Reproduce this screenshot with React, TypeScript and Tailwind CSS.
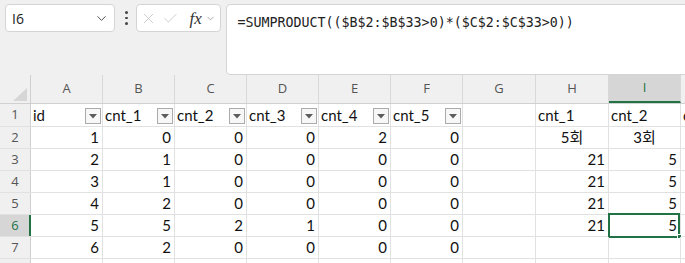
import { X, Check, ChevronDown } from 'lucide-react'

type Col = { key: string; w: string }

const cols: Col[] = [
  { key: 'A', w: 'w-[72px]' },
  { key: 'B', w: 'w-[72px]' },
  { key: 'C', w: 'w-[72px]' },
  { key: 'D', w: 'w-[72px]' },
  { key: 'E', w: 'w-[72px]' },
  { key: 'F', w: 'w-[72px]' },
  { key: 'G', w: 'w-[73px]' },
  { key: 'H', w: 'w-[73px]' },
  { key: 'I', w: 'w-[72px]' },
  { key: '', w: 'w-[72px]' },
]

const header = ['id', 'cnt_1', 'cnt_2', 'cnt_3', 'cnt_4', 'cnt_5', '', 'cnt_1', 'cnt_2', 'c']

const rows: (string | number)[][] = [
  [1, 0, 0, 0, 2, 0, '', '5회', '3회', ''],
  [2, 1, 0, 0, 0, 0, '', 21, 5, ''],
  [3, 1, 0, 0, 0, 0, '', 21, 5, ''],
  [4, 2, 0, 0, 0, 0, '', 21, 5, ''],
  [5, 5, 2, 1, 0, 0, '', 21, 5, ''],
  [6, 2, 0, 0, 0, 0, '', '', '', ''],
]

const cellFont = "font-['Lato','Noto_Sans_CJK_KR',sans-serif] text-[15px] text-[#111]"

function FilterButton() {
  return (
    <span className="ml-auto mr-[1px] mb-[1px] flex h-[16px] w-[16px] shrink-0 items-center justify-center border border-[#ababab] bg-[#f7f7f7]">
      <svg width="8" height="5" viewBox="0 0 8 5">
        <path d="M0 0h8L4 4.5z" fill="#5c5c5c" />
      </svg>
    </span>
  )
}

function FormulaBar() {
  return (
    <div className="flex h-[75px] items-start bg-[#f0f0f0] pt-[4px]">
      <div className="ml-[5px] flex h-[28px] w-[110px] shrink-0 items-center rounded-[4px] border border-[#d4d4d4] bg-white pl-[6px] pr-[5px]">
        <span className="font-['Open_Sans',sans-serif] text-[14px] text-[#222]">I6</span>
        <ChevronDown className="ml-auto text-[#444]" size={15} strokeWidth={1.5} />
      </div>
      <div className="ml-[10px] flex h-[28px] w-[3px] flex-col items-center justify-center gap-[3px]">
        <span className="h-[2.5px] w-[2.5px] rounded-full bg-[#444]" />
        <span className="h-[2.5px] w-[2.5px] rounded-full bg-[#444]" />
        <span className="h-[2.5px] w-[2.5px] rounded-full bg-[#444]" />
      </div>
      <div className="ml-[8px] flex h-[28px] w-[85px] shrink-0 items-center rounded-[4px] border border-[#d4d4d4] bg-white pl-[3px]">
        <X className="text-[#c4c4c4]" size={17} strokeWidth={1.2} />
        <Check className="ml-[5px] text-[#c4c4c4]" size={17} strokeWidth={1.2} />
        <span className="ml-[11px] font-['Liberation_Serif',serif] text-[17px] italic leading-none text-[#333]">fx</span>
        <ChevronDown className="ml-[3px] text-[#888]" size={11} strokeWidth={1.5} />
      </div>
      <div className="ml-[5px] h-[71px] w-[480px] shrink-0 rounded-[4px] border border-[#d4d4d4] bg-white pl-[11px] pt-[4px]">
        <span className="font-['DejaVu_Sans_Mono',monospace] text-[13.3px] text-[#222]">
          =SUMPRODUCT(($B$2:$B$33&gt;0)*($C$2:$C$33&gt;0))
        </span>
      </div>
    </div>
  )
}

function ColumnHeader() {
  return (
    <div className="flex h-[29px] border-b border-[#d0d0d0] bg-[#f0f0f0]">
      <div className="relative w-[31px] shrink-0 border-r border-[#d0d0d0]">
        <svg className="absolute left-[13px] top-[13px]" width="14" height="13" viewBox="0 0 14 13">
          <path d="M14 0v13H0z" fill="#d6d6d6" />
        </svg>
      </div>
      {cols.map((c, i) => (
        <div
          key={i}
          className={`${c.w} shrink-0 flex items-center justify-center border-r border-[#d8d8d8] font-['Open_Sans',sans-serif] text-[13px] ${
            c.key === 'I' ? 'bg-[#d6d6d6] border-b-2 border-b-[#217346] text-[#217346]' : 'text-[#555]'
          }`}
        >
          {c.key}
        </div>
      ))}
    </div>
  )
}

function RowHeader({ n, active }: { n: number; active?: boolean }) {
  return (
    <div
      className={`flex w-[31px] shrink-0 items-center justify-center font-['Open_Sans',sans-serif] text-[13px] ${
        active
          ? 'border-r-2 border-r-[#217346] bg-[#d6d6d6] pl-[1px] text-[#217346]'
          : 'border-r border-[#d0d0d0] bg-[#f0f0f0] text-[#555]'
      }`}
    >
      {n}
    </div>
  )
}

export default function App() {
  return (
    <div className="h-[263px] w-[685px] overflow-hidden bg-white">
      <FormulaBar />
      <ColumnHeader />

      <div className="flex h-[23px] border-b border-[#e1e1e1]">
        <RowHeader n={1} />
        {cols.map((c, i) => (
          <div key={i} className={`${c.w} shrink-0 flex items-end border-r border-[#e1e1e1] pl-[2px] pb-[1px] ${cellFont}`}>
            <span className="leading-[19px] whitespace-nowrap">{header[i]}</span>
            {i < 6 && <FilterButton />}
          </div>
        ))}
      </div>

      {rows.map((r, ri) => (
        <div key={ri} className="flex h-[22px] border-b border-[#e1e1e1]">
          <RowHeader n={ri + 2} active={ri === 4} />
          {cols.map((c, i) => {
            const v = r[i]
            const centered = typeof v === 'string' && v.endsWith('회')
            const selected = ri === 4 && c.key === 'I'
            return (
              <div
                key={i}
                className={`${c.w} relative shrink-0 flex items-end border-r border-[#e1e1e1] pb-[1px] ${
                  centered ? 'justify-center' : 'justify-end pr-[3px]'
                } ${cellFont}`}
              >
                <span className="leading-[19px]">{v}</span>
                {selected && (
                  <>
                    <span className="absolute -left-[1px] -top-[2px] bottom-[-2px] right-[0px] border-2 border-[#217346]" />
                    <span className="absolute -bottom-[3px] -right-[2px] h-[5px] w-[5px] border border-white bg-[#217346]" />
                  </>
                )}
              </div>
            )
          })}
        </div>
      ))}
      <div className="flex h-[10px]">
        <div className="w-[31px] shrink-0 border-r border-[#d0d0d0] bg-[#f0f0f0]" />
        {cols.map((c, i) => (
          <div key={i} className={`${c.w} shrink-0 border-r border-[#e1e1e1]`} />
        ))}
      </div>
    </div>
  )
}
